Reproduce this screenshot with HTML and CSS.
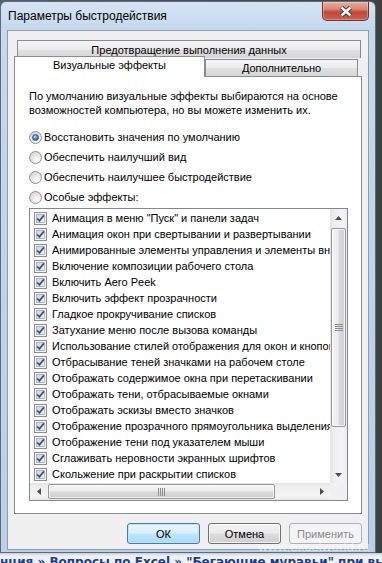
FILE: index.html
```html
<!DOCTYPE html>
<html lang="ru">
<head>
  <meta charset="UTF-8">
  <title>Параметры быстродействия</title>
  <link rel="stylesheet" href="styles.css">
</head>
<body>
  <svg class="defs" width="0" height="0">
    <defs>
      <linearGradient id="cbg" x1="0" y1="0" x2="1" y2="1">
        <stop offset="0" stop-color="#cdd3da"/>
        <stop offset="1" stop-color="#f7f8f9"/>
      </linearGradient>
      <symbol id="chk" viewBox="0 0 13 13">
        <rect x="0.5" y="0.5" width="12" height="12" fill="#f5f5f5" stroke="#8e8f8f"/>
        <rect x="2.5" y="2.5" width="8" height="8" fill="url(#cbg)" stroke="#b3b8be"/>
        <path d="M3.2 6.3 L5.4 8.8 L9.9 3.4" fill="none" stroke="#3c559a" stroke-width="1.8"/>
      </symbol>
    </defs>
  </svg>

  <div class="screen">
    <div class="window">
      <div class="titlebar">
        <span class="title">Параметры быстродействия</span>
        <div class="close-btn">
          <svg width="14" height="11" viewBox="0 0 14 11">
            <path d="M2.5 1.5 L11.5 9.5 M11.5 1.5 L2.5 9.5" stroke="#4a3a3a" stroke-width="4.4"/>
            <path d="M2.5 1.5 L11.5 9.5 M11.5 1.5 L2.5 9.5" stroke="#ffffff" stroke-width="2.4"/>
          </svg>
        </div>
      </div>

      <div class="client">
        <div class="tab-back">Предотвращение выполнения данных</div>
        <div class="tab-row">
          <div class="tab active">Визуальные эффекты</div>
          <div class="tab">Дополнительно</div>
        </div>

        <div class="pane">
          <p class="intro">По умолчанию визуальные эффекты выбираются на основе<br>возможностей компьютера, но вы можете изменить их.</p>

          <div class="radios">
            <div class="radio-row"><span class="radio checked"></span>Восстановить значения по умолчанию</div>
            <div class="radio-row"><span class="radio"></span>Обеспечить наилучший вид</div>
            <div class="radio-row"><span class="radio"></span>Обеспечить наилучшее быстродействие</div>
            <div class="radio-row"><span class="radio"></span>Особые эффекты:</div>
          </div>

          <div class="listbox">
            <div class="list-main">
              <ul class="items">
                <li><svg class="cb"><use href="#chk"/></svg>Анимация в меню "Пуск" и панели задач</li>
                <li><svg class="cb"><use href="#chk"/></svg>Анимация окон при свертывании и развертывании</li>
                <li><svg class="cb"><use href="#chk"/></svg>Анимированные элементы управления и элементы внутри окна</li>
                <li><svg class="cb"><use href="#chk"/></svg>Включение композиции рабочего стола</li>
                <li><svg class="cb"><use href="#chk"/></svg>Включить Aero Peek</li>
                <li><svg class="cb"><use href="#chk"/></svg>Включить эффект прозрачности</li>
                <li><svg class="cb"><use href="#chk"/></svg>Гладкое прокручивание списков</li>
                <li><svg class="cb"><use href="#chk"/></svg>Затухание меню после вызова команды</li>
                <li><svg class="cb"><use href="#chk"/></svg>Использование стилей отображения для окон и кнопок</li>
                <li><svg class="cb"><use href="#chk"/></svg>Отбрасывание теней значками на рабочем столе</li>
                <li><svg class="cb"><use href="#chk"/></svg>Отображать содержимое окна при перетаскивании</li>
                <li><svg class="cb"><use href="#chk"/></svg>Отображать тени, отбрасываемые окнами</li>
                <li><svg class="cb"><use href="#chk"/></svg>Отображать эскизы вместо значков</li>
                <li><svg class="cb"><use href="#chk"/></svg>Отображение прозрачного прямоугольника выделения</li>
                <li><svg class="cb"><use href="#chk"/></svg>Отображение тени под указателем мыши</li>
                <li><svg class="cb"><use href="#chk"/></svg>Сглаживать неровности экранных шрифтов</li>
                <li><svg class="cb"><use href="#chk"/></svg>Скольжение при раскрытии списков</li>
              </ul>
              <div class="vscroll">
                <div class="sb-btn"><svg width="7" height="4" viewBox="0 0 7 4"><path d="M3.5 0 L7 4 H0 Z" fill="#4d4d4d"/></svg></div>
                <div class="vthumb">
                  <svg width="8" height="7" viewBox="0 0 8 7"><path d="M0 0.5h8M0 2.5h8M0 4.5h8M0 6.5h8" stroke="#8c8c8c"/></svg>
                </div>
                <div class="sb-fill"></div>
                <div class="sb-btn"><svg width="7" height="4" viewBox="0 0 7 4"><path d="M0 0 H7 L3.5 4 Z" fill="#4d4d4d"/></svg></div>
              </div>
            </div>
            <div class="hscroll-row">
              <div class="hscroll">
                <div class="sb-btn"><svg width="4" height="7" viewBox="0 0 4 7"><path d="M4 0 V7 L0 3.5 Z" fill="#4d4d4d"/></svg></div>
                <div class="hthumb">
                  <svg width="7" height="8" viewBox="0 0 7 8"><path d="M0.5 0v8M2.5 0v8M4.5 0v8M6.5 0v8" stroke="#8c8c8c"/></svg>
                </div>
                <div class="sb-fill"></div>
                <div class="sb-btn"><svg width="4" height="7" viewBox="0 0 4 7"><path d="M0 0 V7 L4 3.5 Z" fill="#4d4d4d"/></svg></div>
              </div>
              <div class="corner"></div>
            </div>
          </div>
        </div>

        <div class="buttons">
          <button class="btn default">ОК</button>
          <button class="btn">Отмена</button>
          <button class="btn" disabled>Применить</button>
        </div>
      </div>
    </div>

    <div class="page-strip">нция » Вопросы по Excel » "Бегающие муравьи" при выделении</div>
    <div class="watermark">www.excelworld.ru</div>
  </div>
</body>
</html>
```

FILE: styles.css
```css
html, body {
  margin: 0;
  padding: 0;
}
body {
  width: 382px;
  height: 563px;
  overflow: hidden;
  font-family: "Liberation Sans", Arial, sans-serif;
  font-size: 11px;
  color: #000;
  background: #3d4442;
}
.defs {
  position: absolute;
  width: 0;
  height: 0;
}
.screen {
  position: relative;
  width: 382px;
  height: 563px;
  display: flex;
  flex-direction: column;
  background: linear-gradient(90deg, #56606a 0, #3d4442 377px, #37403d 100%);
}

/* window frame */
.window {
  width: 376px;
  height: 552px;
  margin-top: 1px;
  box-sizing: border-box;
  border: 1px solid #5b6b7c;
  border-radius: 6px 6px 0 0;
  background: linear-gradient(180deg, #d5e4f3 0, #c6d9ed 26px, #bed3ea 55%, #b9d0e8 100%);
  padding: 0 6px 2px;
  display: flex;
  flex-direction: column;
}
.titlebar {
  height: 28px;
  display: flex;
  justify-content: space-between;
  align-items: flex-start;
}
.title {
  padding: 7px 0 0 1px;
  font-size: 12px;
  line-height: 15px;
}
.close-btn {
  width: 47px;
  height: 19px;
  box-sizing: border-box;
  border: 1px solid #6b3430;
  border-top: none;
  border-radius: 0 0 5px 5px;
  background: linear-gradient(180deg, #e7ab9c 0, #d98472 40%, #c2483a 55%, #cc5f4c 100%);
  box-shadow: inset 0 0 0 1px rgba(255, 255, 255, 0.3);
  display: flex;
  align-items: center;
  justify-content: center;
}

/* client area */
.client {
  flex: 1;
  background: #f0f0f0;
  border: 1px solid #8b9db0;
  padding: 9px 6px 0;
  display: flex;
  flex-direction: column;
}
.tab-back {
  margin: 0 1px 0 3px;
  height: 18px;
  box-sizing: border-box;
  border: 1px solid #898c95;
  border-bottom: none;
  padding-top: 2px;
  line-height: 15px;
  text-align: center;
  background: linear-gradient(180deg, #f5f5f5 0, #ececec 50%, #e0e0e0 51%, #d6d6d6 100%);
}
.tab-row {
  display: flex;
  align-items: flex-end;
  height: 18px;
}
.tab {
  width: 153px;
  height: 17px;
  box-sizing: border-box;
  border: 1px solid #898c95;
  border-bottom: none;
  padding-top: 1px;
  line-height: 15px;
  text-align: center;
  background: linear-gradient(180deg, #f5f5f5 0, #ececec 50%, #e0e0e0 51%, #d6d6d6 100%);
}
.tab.active {
  width: 191px;
  height: 21px;
  margin-bottom: -1px;
  background: #fff;
  position: relative;
  z-index: 1;
}
.pane {
  height: 438px;
  box-sizing: border-box;
  border: 1px solid #898c95;
  background: #fff;
  padding: 12px 14px 0;
}
.intro {
  margin: 0;
  line-height: 14px;
}
.radios {
  margin-top: 10px;
}
.radio-row {
  height: 20px;
  display: flex;
  align-items: center;
  gap: 2px;
}
.radio {
  width: 13px;
  height: 13px;
  box-sizing: border-box;
  border: 1px solid #8e8f8f;
  border-radius: 50%;
  background: radial-gradient(circle at 65% 70%, #fdfdfd 0, #e8e8e8 45%, #cbcbcb 100%);
  display: flex;
  align-items: center;
  justify-content: center;
  flex: none;
}
.radio.checked::after {
  content: "";
  width: 7px;
  height: 7px;
  box-sizing: border-box;
  border-radius: 50%;
  border: 1px solid #20548c;
  background: radial-gradient(circle at 40% 35%, #b4ecff 0, #3a8ad0 50%, #17497f 100%);
}

/* list box */
.listbox {
  margin-top: 1px;
  width: 319px;
  height: 293px;
  box-sizing: border-box;
  border: 1px solid #828790;
  display: flex;
  flex-direction: column;
}
.list-main {
  flex: 1;
  display: flex;
  min-height: 0;
}
.items {
  flex: 1;
  list-style: none;
  margin: 0;
  padding: 1px 0 0;
  overflow: hidden;
}
.items li {
  height: 16px;
  display: flex;
  align-items: center;
  gap: 5px;
  padding-left: 4px;
  white-space: nowrap;
}
.cb {
  width: 13px;
  height: 13px;
  flex: none;
}
.vscroll {
  width: 17px;
  display: flex;
  flex-direction: column;
  background: linear-gradient(90deg, #e4e4e4 0, #eeeeee 25%, #f4f4f4 75%, #ebebeb 100%);
}
.hscroll-row {
  height: 17px;
  display: flex;
}
.hscroll {
  flex: 1;
  display: flex;
  background: linear-gradient(180deg, #e4e4e4 0, #eeeeee 25%, #f4f4f4 75%, #ebebeb 100%);
}
.sb-btn {
  width: 17px;
  height: 17px;
  flex: none;
  display: flex;
  align-items: center;
  justify-content: center;
}
.sb-fill {
  flex: 1;
}
.vthumb {
  margin: 2px 0 0 1px;
  width: 15px;
  height: 199px;
  box-sizing: border-box;
  border: 1px solid #979797;
  border-radius: 2px;
  background: linear-gradient(90deg, #f6f6f6 0, #ececec 45%, #dadada 55%, #cfcfcf 100%);
  box-shadow: inset 0 0 0 1px rgba(255, 255, 255, 0.7);
  display: flex;
  align-items: center;
  justify-content: center;
}
.hthumb {
  margin: 1px 0 0 1px;
  width: 227px;
  height: 15px;
  box-sizing: border-box;
  border: 1px solid #979797;
  border-radius: 2px;
  background: linear-gradient(180deg, #f6f6f6 0, #ececec 45%, #dadada 55%, #cfcfcf 100%);
  box-shadow: inset 0 0 0 1px rgba(255, 255, 255, 0.7);
  display: flex;
  align-items: center;
  justify-content: center;
}
.corner {
  width: 17px;
  background: #f0f0f0;
}

/* dialog buttons */
.buttons {
  margin-top: 9px;
  display: flex;
  justify-content: flex-end;
  gap: 8px;
}
.btn {
  width: 73px;
  height: 21px;
  box-sizing: border-box;
  padding: 0;
  font-family: inherit;
  font-size: 11px;
  color: #000;
  border: 1px solid #707070;
  border-radius: 3px;
  background: linear-gradient(180deg, #f2f2f2 0, #ebebeb 48%, #dddddd 52%, #cfcfcf 100%);
  box-shadow: inset 0 0 0 1px rgba(255, 255, 255, 0.75);
}
.btn.default {
  border-color: #3c7fb1;
  background: linear-gradient(180deg, #eaf6fd 0, #d9f0fc 48%, #bee6fd 52%, #a7d9f5 100%);
  box-shadow: inset 0 0 0 1px #bfe3f8;
}
.btn:disabled {
  color: #8a8a8a;
  border-color: #adb2b5;
  background: #f4f4f4;
  box-shadow: none;
}

/* page behind the dialog */
.page-strip {
  flex: 1;
  padding: 2px 0 0 0;
  background: linear-gradient(180deg, #c9cfd4 0, #eef1f3 3px);
  font-family: "DejaVu Sans", Verdana, sans-serif;
  font-size: 12px;
  font-weight: bold;
  line-height: 14px;
  color: #1f3b8a;
  white-space: nowrap;
  overflow: hidden;
}
.watermark {
  position: absolute;
  left: 258px;
  top: 539px;
  font-size: 13.5px;
  color: rgba(255, 255, 255, 0.55);
}
```
